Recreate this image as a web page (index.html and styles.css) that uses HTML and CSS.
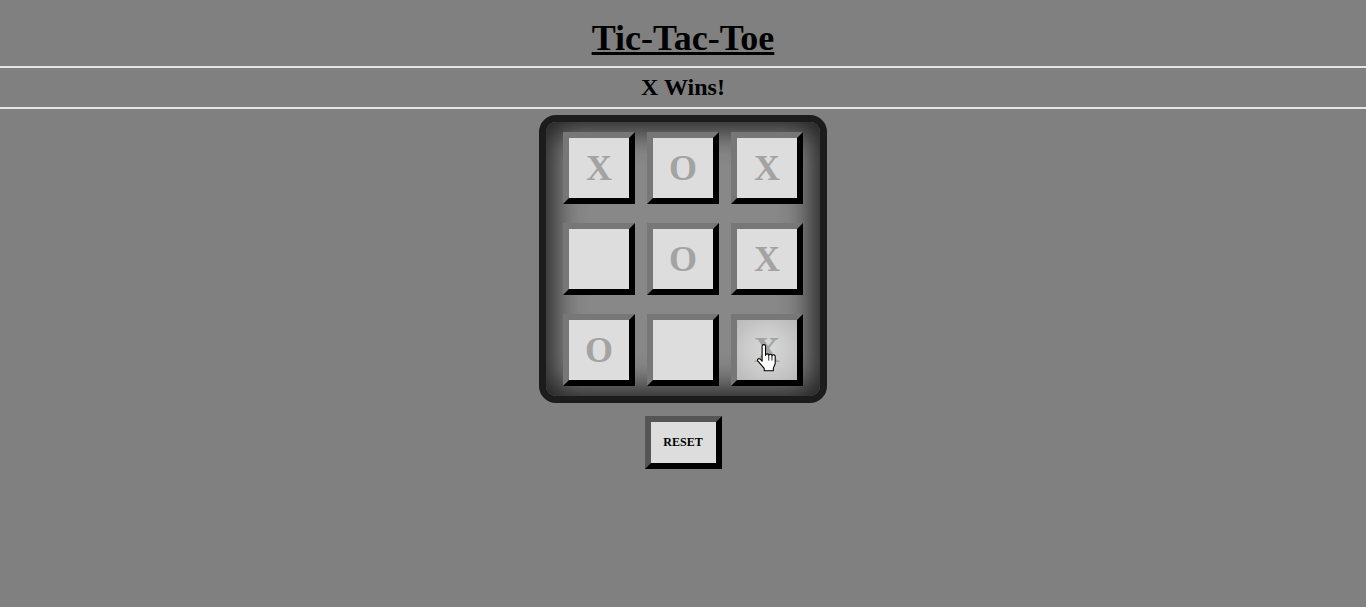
FILE: index.html
```html
<!DOCTYPE html>
<html lang="en">
<head>
<meta charset="utf-8">
<title>Tic-Tac-Toe</title>
<link rel="stylesheet" href="styles.css">
</head>
<body>
  <header class="title-bar">
    <h1 class="title">Tic-Tac-Toe</h1>
  </header>
  <div class="status-bar">
    <h2 class="status">X Wins!</h2>
  </div>
  <main class="game">
    <div class="board">
      <div class="cell">X</div>
      <div class="cell">O</div>
      <div class="cell">X</div>
      <div class="cell"></div>
      <div class="cell">O</div>
      <div class="cell">X</div>
      <div class="cell">O</div>
      <div class="cell"></div>
      <div class="cell cell-hover">X
        <svg class="cursor" width="24" height="30" viewBox="0 0 22 28" aria-hidden="true">
          <path d="M5.5 2.2 a1.6 1.6 0 0 1 3.2 0 V10.6 a1.5 1.5 0 0 1 3 0.2 a1.5 1.5 0 0 1 3 0.5 a1.5 1.5 0 0 1 3 0.7 V18.5 L16 22.5 V25 H7.5 V22.8 L1.6 16 a1.4 1.4 0 0 1 2.2 -1.8 L5.5 16 Z" fill="#fff" stroke="#000" stroke-width="1" stroke-linejoin="round"/>
          <path d="M11.7 11 V15.5 M14.7 11.5 V15.5" stroke="#000" stroke-width="0.8" fill="none"/>
        </svg>
      </div>
    </div>
    <button class="reset" type="button">RESET</button>
  </main>
</body>
</html>
```
FILE: styles.css
```css
html, body {
  margin: 0;
  padding: 0;
}

body {
  background: #808080;
  font-family: "Liberation Serif", "Times New Roman", serif;
  color: #000;
}

.title-bar {
  height: 68px;
  border-bottom: 2px solid #e6e6e6;
  display: flex;
  align-items: center;
  justify-content: center;
  padding-top: 10px;
  box-sizing: border-box;
}

.title {
  margin: 0;
  font-size: 36px;
  font-weight: bold;
  text-decoration: underline;
  line-height: 1;
}

.status-bar {
  height: 41px;
  border-bottom: 2px solid #e6e6e6;
  display: flex;
  align-items: center;
  justify-content: center;
  padding-bottom: 2px;
  box-sizing: border-box;
}

.status {
  margin: 0;
  font-size: 24px;
  font-weight: bold;
  line-height: 1;
}

.game {
  display: flex;
  flex-direction: column;
  align-items: center;
  padding-top: 6px;
}

.board {
  width: 288px;
  height: 288px;
  box-sizing: border-box;
  border: 7px solid #1c1c1c;
  border-radius: 17px;
  padding: 10px 17px;
  background: #888888;
  box-shadow: inset 0 0 30px 8px #1e1e1e;
  display: grid;
  grid-template-columns: repeat(3, 72px);
  grid-template-rows: repeat(3, 72px);
  column-gap: 12px;
  row-gap: 19px;
}

.cell {
  position: relative;
  box-sizing: border-box;
  width: 72px;
  height: 72px;
  border: 6px solid;
  border-color: #777 #000 #000 #777;
  background: #dddddd;
  color: #a3a3a3;
  font-size: 36px;
  font-weight: bold;
  display: flex;
  align-items: center;
  justify-content: center;
  line-height: 1;
}

.cell-hover {
  background: radial-gradient(circle at 50% 50%, #d8d8d8 0%, #cdcdcd 45%, #b9b9b9 100%);
}

.cursor {
  position: absolute;
  left: 19px;
  top: 24px;
}

.reset {
  margin-top: 13px;
  width: 77px;
  height: 53px;
  box-sizing: border-box;
  border: 6px solid;
  border-color: #555 #000 #000 #555;
  background: #dddddd;
  font-family: "Liberation Serif", "Times New Roman", serif;
  font-size: 12px;
  font-weight: bold;
  color: #000;
  padding: 0;
  cursor: pointer;
}
```
